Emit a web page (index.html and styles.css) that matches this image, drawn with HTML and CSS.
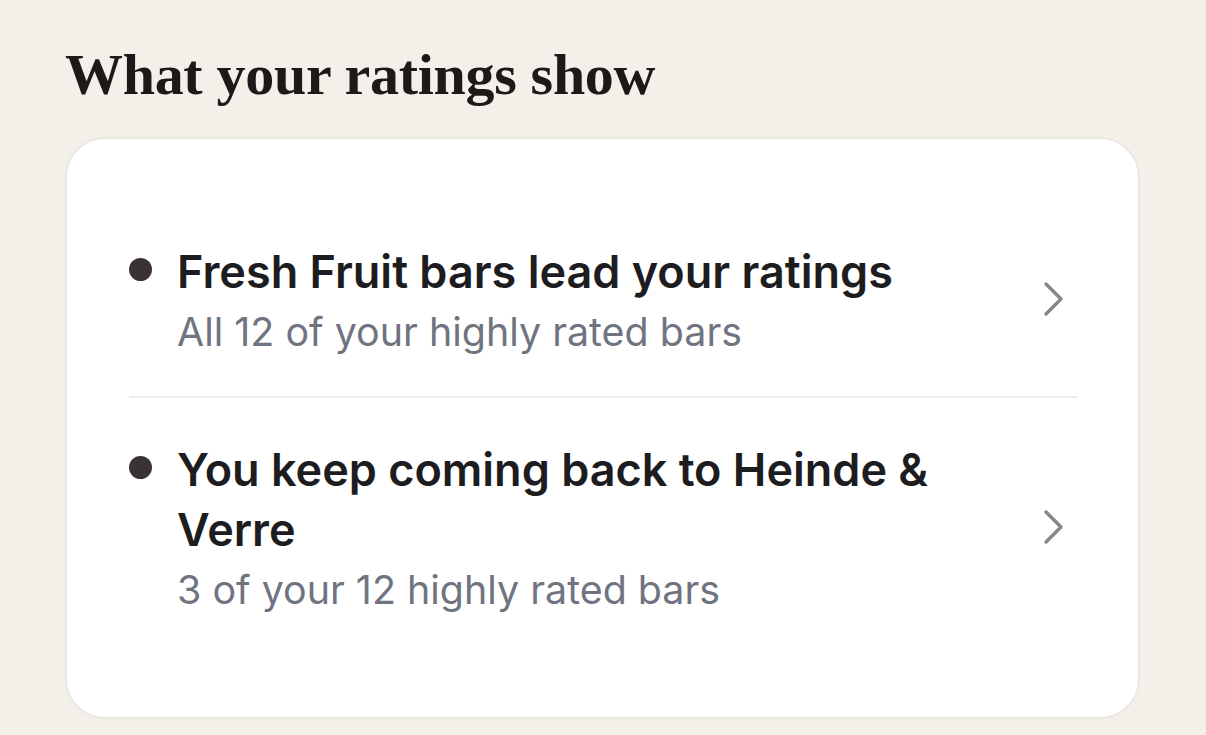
FILE: index.html
```html
<!DOCTYPE html>
<html>
<head>
<meta charset="utf-8">
<link rel="stylesheet" href="styles.css">
</head>
<body>
<section class="section">
  <h2 class="section-title">What your ratings show</h2>
  <div class="card">
    <div class="row">
      <span class="dot"></span>
      <div class="row-text">
        <div class="row-title">Fresh Fruit bars lead your ratings</div>
        <div class="row-sub">All 12 of your highly rated bars</div>
      </div>
      <svg class="chev" viewBox="0 0 24 36" width="24" height="36"><path d="M5 3 L20 18 L5 33" fill="none" stroke="#86868b" stroke-width="3.4" stroke-linecap="round" stroke-linejoin="round"/></svg>
    </div>
    <div class="divider"></div>
    <div class="row">
      <span class="dot"></span>
      <div class="row-text">
        <div class="row-title">You keep coming back to Heinde &amp; Verre</div>
        <div class="row-sub">3 of your 12 highly rated bars</div>
      </div>
      <svg class="chev" viewBox="0 0 24 36" width="24" height="36"><path d="M5 3 L20 18 L5 33" fill="none" stroke="#86868b" stroke-width="3.4" stroke-linecap="round" stroke-linejoin="round"/></svg>
    </div>
  </div>
</section>
</body>
</html>
```
FILE: styles.css
```css
html, body {
  margin: 0;
  padding: 0;
  background: #f3f0ea;
}
body {
  width: 1206px;
  height: 735px;
  overflow: hidden;
  font-family: Inter, "Noto Sans", sans-serif;
}
.section {
  padding: 39px 66px 0 65px;
}
.section-title {
  margin: 0 0 26px 0;
  font-family: "Liberation Serif", serif;
  font-weight: 700;
  font-size: 58px;
  line-height: 72px;
  color: #1c1a19;
  letter-spacing: -0.3px;
}
.card {
  background: #ffffff;
  border: 2px solid #ebe8e3;
  border-radius: 40px;
  padding: 61px 61px 63px 62px;
}
.row {
  display: flex;
  align-items: center;
  gap: 25px;
  padding: 42px 0 33px 0;
}
.dot {
  align-self: flex-start;
  flex: none;
  width: 23px;
  height: 23px;
  border-radius: 50%;
  background: #3b3234;
  margin-top: 16px;
}
.row-text {
  flex: 1;
  min-width: 0;
}
.row-title {
  font-size: 45px;
  font-weight: 600;
  line-height: 60px;
  color: #1d1d1f;
}
.row-sub {
  font-size: 39.4px;
  font-weight: 400;
  line-height: 61px;
  color: #6f7480;
}
.chev {
  flex: none;
  margin-right: 12px;
  margin-bottom: 8px;
}
.divider {
  height: 2px;
  background: #ececec;
}
```
